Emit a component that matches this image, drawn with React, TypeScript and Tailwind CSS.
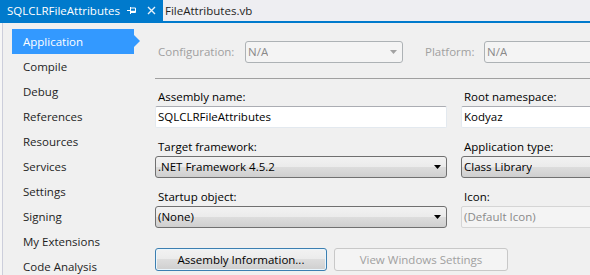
import React from 'react';

const navItems = [
  'Application',
  'Compile',
  'Debug',
  'References',
  'Resources',
  'Services',
  'Settings',
  'Signing',
  'My Extensions',
  'Code Analysis',
];

function Arrow({ disabled }: { disabled?: boolean }) {
  return (
    <svg width="7" height="4" viewBox="0 0 7 4" className="shrink-0">
      <path d="M0 0h7L3.5 4z" fill={disabled ? '#a2a2a2' : '#000'} />
    </svg>
  );
}

function Combo({ value, disabled, className = '' }: { value: string; disabled?: boolean; className?: string }) {
  return (
    <div
      className={`flex h-[22px] items-center justify-between rounded-[3px] border pl-[2px] pr-[5px] ${
        disabled
          ? 'border-[#adb2b5] bg-[#f4f4f4] text-[#8a8a8a]'
          : 'border-[#707070] bg-[linear-gradient(#f2f2f2_0%,#ebebeb_50%,#dddddd_50%,#cfcfcf_100%)] text-black'
      } ${className}`}
    >
      <span className="truncate">{value}</span>
      <Arrow disabled={disabled} />
    </div>
  );
}

function TextBox({ value, disabled, className = '' }: { value: string; disabled?: boolean; className?: string }) {
  return (
    <div
      className={`flex h-[22px] items-center rounded-[2px] border pl-[2px] ${
        disabled
          ? 'border-[#d5d5d5] bg-[#f4f4f4] text-[#8a8a8a]'
          : 'border-[#e3e9ef] border-t-[#abadb3] bg-white text-black'
      } ${className}`}
    >
      {value}
    </div>
  );
}

function Field({ label, children }: { label: string; children: React.ReactNode }) {
  return (
    <div className="flex flex-col">
      <div className="h-[19px] pl-[3px] leading-[19px] text-black">{label}</div>
      {children}
    </div>
  );
}

export default function App() {
  return (
    <div className="h-[275px] w-[590px] overflow-hidden bg-[#eeeef2] font-['Open_Sans',sans-serif] text-[11.5px] text-[#1e1e1e]">
      {/* document tabs */}
      <div className="flex h-[21px] items-center">
        <div className="flex h-full w-[163px] items-center bg-[#007acc] pl-[7px] text-white">
          <span>SQLCLRFileAttributes</span>
          <svg width="11" height="9" viewBox="0 0 11 9" className="ml-[7px]">
            <path d="M0 4.5h3M3.5 1v7M3.5 2h5v4.5h-5" stroke="#fff" strokeWidth="1" fill="none" />
            <path d="M3.5 5.5h5" stroke="#fff" strokeWidth="1.5" />
          </svg>
          <svg width="9" height="9" viewBox="0 0 9 9" className="ml-[9px]">
            <path d="M1 1l7 7M8 1l-7 7" stroke="#e8f2fa" strokeWidth="1.4" />
          </svg>
        </div>
        <span className="pl-[2px] text-[#1e1e1e]">FileAttributes.vb</span>
      </div>
      <div className="h-[2px] bg-[#007acc]" />

      {/* property pages */}
      <div className="flex h-[252px] bg-[#f0f0f0]">
        <div className="w-[3px] shrink-0 border-r border-[#cccedb] bg-[#f6f6f6]" />
        <div className="w-[152px] shrink-0 pl-[9px] pt-[6px]">
          {navItems.map((item, i) => (
            <div key={item} className="relative h-[25px] w-[122px]">
              {i === 0 && (
                <>
                  <div className="absolute inset-0 bg-[#3399ff]" />
                  <div className="absolute right-[-6px] top-[6px] h-0 w-0 border-y-[6px] border-l-[6px] border-y-transparent border-l-[#3399ff]" />
                </>
              )}
              <span className={`relative block pl-[11px] leading-[25px] ${i === 0 ? 'text-white' : 'text-[#1e1e1e]'}`}>
                {item}
              </span>
            </div>
          ))}
        </div>

        <div className="flex-1 pt-[18px]">
          <div className="flex h-[22px] items-center">
            <span className="w-[90px] shrink-0 pl-[3px] text-[#a0a0a0]">Configuration:</span>
            <Combo value="N/A" disabled className="w-[158px] shrink-0" />
            <span className="ml-[22px] w-[59px] shrink-0 text-[#a0a0a0]">Platform:</span>
            <Combo value="N/A" disabled className="w-[158px] shrink-0" />
          </div>
          <div className="mt-[15px] h-px bg-[#a0a0a0]" />

          <div className="mt-[8px] grid grid-cols-[292px_160px] gap-x-[14px] gap-y-[9px]">
            <Field label="Assembly name:">
              <TextBox value="SQLCLRFileAttributes" />
            </Field>
            <Field label="Root namespace:">
              <TextBox value="Kodyaz" />
            </Field>
            <Field label="Target framework:">
              <Combo value=".NET Framework 4.5.2" />
            </Field>
            <Field label="Application type:">
              <Combo value="Class Library" />
            </Field>
            <Field label="Startup object:">
              <Combo value="(None)" />
            </Field>
            <Field label="Icon:">
              <TextBox value="(Default Icon)" disabled />
            </Field>
          </div>

          <div className="mt-[20px] flex gap-[7px]">
            <button className="h-[23px] w-[172px] shrink-0 rounded-[3px] border border-[#3c7fb1] bg-[linear-gradient(#f2f2f2_0%,#ebebeb_50%,#dddddd_50%,#cfcfcf_100%)] text-black shadow-[inset_0_0_0_1px_#eaf6fd]">
              Assembly Information...
            </button>
            <button className="h-[23px] w-[174px] shrink-0 rounded-[3px] border border-[#c8c8c8] bg-[#f4f4f4] text-[#a0a0a0]">
              View Windows Settings
            </button>
          </div>
        </div>
      </div>
    </div>
  );
}
